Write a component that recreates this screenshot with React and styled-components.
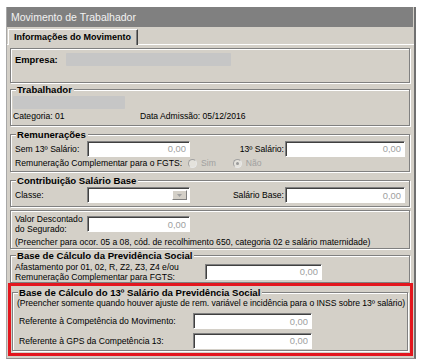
import React from 'react';
import styled, { createGlobalStyle } from 'styled-components';

const GlobalStyle = createGlobalStyle`
  body {
    margin: 0;
    background: #ffffff;
    font-family: "Liberation Sans", Arial, sans-serif;
    font-size: 8.6px;
    color: #000;
  }
`;

const Window = styled.div`
  margin: 7px 0 0 6px;
  width: 407px;
  background: #d4d0c8;
  border-left: 1px solid #a8a8a8;
  border-right: 2px solid #707070;
  border-bottom: 1px solid #909090;
`;

const TitleBar = styled.div`
  height: 20px;
  background: #808080;
  color: #f2f2f2;
  font-size: 10.5px;
  line-height: 20px;
  padding-left: 4px;
  margin-right: 1px;
`;

const TabStrip = styled.div`
  display: flex;
  height: 18px;
  padding: 2px 0 0 1px;
  box-sizing: border-box;
  border-bottom: 1px solid #ffffff;
`;

const Tab = styled.div`
  padding: 0 6px 0 5px;
  font-weight: bold;
  font-size: 9px;
  line-height: 15px;
  border-top: 1px solid #ffffff;
  border-left: 1px solid #ffffff;
  border-right: 1px solid #404040;
  box-shadow: inset -1px 0 0 #808080;
  margin-bottom: -1px;
  background: #d4d0c8;
`;

const TabPage = styled.div`
  padding: 3px 4px 2px 3px;
  display: flex;
  flex-direction: column;
`;

const Group = styled.fieldset`
  margin: ${p => p.$top || 0}px 0 0 0;
  padding: ${p => p.$pad || '0 4px 2px 4px'};
  border: 1px solid #808080;
  box-shadow: inset 1px 1px 0 #ffffff, 1px 1px 0 #ffffff;
  min-width: 0;
`;

const Legend = styled.legend`
  margin-left: ${p => p.$indent ?? 1}px;
  padding: 0 2px 0 1px;
  font-weight: bold;
  font-size: 9.6px;
  line-height: 11px;
  background: #d4d0c8;
`;

const Blur = styled.div`
  width: ${p => p.$w}px;
  height: 13px;
  background: #c6c6c6;
  border-radius: 1px;
`;

const EmpresaRow = styled.div`
  display: flex;
  align-items: center;
  gap: 8px;
  font-weight: bold;
  font-size: 9.4px;
  height: 14px;
`;

const InfoRow = styled.div`
  display: grid;
  grid-template-columns: 127px 1fr;
  height: 14px;
  align-items: center;
`;

const FieldRow = styled.div`
  display: grid;
  grid-template-columns: ${p => p.$cols};
  align-items: center;
  height: ${p => p.$h || 18}px;
`;

const Label = styled.span`
  white-space: nowrap;
  text-align: ${p => (p.$right ? 'right' : 'left')};
  padding-right: ${p => (p.$right ? 1 : 0)}px;
  line-height: 10px;
`;

const TextBox = styled.input`
  box-sizing: border-box;
  height: 16px;
  width: 100%;
  margin: 0;
  padding: 0 3px;
  font-family: inherit;
  font-size: 9.4px;
  color: #a0a0a0;
  text-align: right;
  background: #ffffff;
  border: 1px solid;
  border-color: #808080 #ffffff #ffffff #808080;
  box-shadow: inset 1px 1px 0 #404040;
  outline: none;
`;

const Select = styled.div`
  box-sizing: border-box;
  height: 16px;
  display: flex;
  justify-content: flex-end;
  align-items: stretch;
  padding: 2px;
  background: #ffffff;
  border: 1px solid;
  border-color: #808080 #ffffff #ffffff #808080;
  box-shadow: inset 1px 1px 0 #404040;
`;

const DropButton = styled.div`
  width: 13px;
  background: #d4d0c8;
  border: 1px solid;
  border-color: #ffffff #808080 #808080 #ffffff;
  display: flex;
  align-items: center;
  justify-content: center;
`;

const RadioGroup = styled.div`
  display: flex;
  align-items: center;
  gap: 17px;
  color: #a0a0a0;
`;

const RadioItem = styled.label`
  display: flex;
  align-items: center;
  gap: 4px;
`;

const RadioDot = styled.span`
  width: 7px;
  height: 7px;
  border-radius: 50%;
  border: 1px solid #a0a0a0;
  border-right-color: #e8e8e8;
  border-bottom-color: #e8e8e8;
  background: #e4e2dc;
  display: flex;
  align-items: center;
  justify-content: center;
  &::after {
    content: '';
    width: 3px;
    height: 3px;
    border-radius: 50%;
    background: ${p => (p.$on ? '#9a9a9a' : 'transparent')};
  }
`;

const Note = styled.div`
  white-space: nowrap;
  line-height: 11px;
  letter-spacing: ${p => p.$tight ? '-0.05px' : '0'};
`;

const Highlight = styled.div`
  margin: 0 -3px 0 -2px;
  padding: 0 2px 2px 1px;
  border: 3px solid #e3161e;
`;

const Radio = ({ on, children }) => (
  <RadioItem>
    <RadioDot $on={on} />
    {children}
  </RadioItem>
);

export default function App() {
  return (
    <>
      <GlobalStyle />
      <Window>
        <TitleBar>Movimento de Trabalhador</TitleBar>
        <TabStrip>
          <Tab>Informações do Movimento</Tab>
        </TabStrip>
        <TabPage>
          <Group $pad="3px 4px 16px 4px">
            <EmpresaRow>
              Empresa:
              <Blur $w={165} />
            </EmpresaRow>
          </Group>

          <Group $top={1} $pad="0 2px 2px 2px">
            <Legend $indent={3}>Trabalhador</Legend>
            <Blur $w={112} style={{ marginTop: 1 }} />
            <InfoRow>
              <span>Categoria: 01</span>
              <span>Data Admissão: 05/12/2016</span>
            </InfoRow>
          </Group>

          <Group $top={3}>
            <Legend>Remunerações</Legend>
            <FieldRow $cols="72px 103px 1fr 120px" $h={17}>
              <Label>Sem 13º Salário:</Label>
              <TextBox readOnly value="0,00" />
              <Label $right>13º Salário:</Label>
              <TextBox readOnly value="0,00" />
            </FieldRow>
            <FieldRow $cols="173px 1fr" $h={12}>
              <Label>Remuneração Complementar para o FGTS:</Label>
              <RadioGroup>
                <Radio>Sim</Radio>
                <Radio on>Não</Radio>
              </RadioGroup>
            </FieldRow>
          </Group>

          <Group $top={3}>
            <Legend>Contribuição Salário Base</Legend>
            <FieldRow $cols="72px 103px 1fr 120px">
              <Label>Classe:</Label>
              <Select>
                <DropButton>
                  <svg width="5" height="3" viewBox="0 0 5 3">
                    <path d="M0 0 H5 L2.5 3 Z" fill="#a0a0a0" />
                  </svg>
                </DropButton>
              </Select>
              <Label $right>Salário Base:</Label>
              <TextBox readOnly value="0,00" />
            </FieldRow>
          </Group>

          <Group $top={3} $pad="2px 4px 0 4px">
            <FieldRow $cols="72px 103px" $h={22}>
              <Label>Valor Descontado<br />do Segurado:</Label>
              <TextBox readOnly value="0,00" />
            </FieldRow>
            <Note style={{ marginTop: 2 }}>
              (Preencher para ocor. 05 a 08, cód. de recolhimento 650, categoria 02 e salário maternidade)
            </Note>
          </Group>

          <Group $top={1} $pad="0 4px 0 4px">
            <Legend>Base de Cálculo da Previdência Social</Legend>
            <FieldRow $cols="190px 117px" $h={21}>
              <Label>Afastamento por 01, 02, R, Z2, Z3, Z4 e/ou<br />Remuneração Complementar para FGTS:</Label>
              <TextBox readOnly value="0,00" />
            </FieldRow>
          </Group>

          <Highlight>
            <Group $top={1} $pad="0 4px 0 4px">
              <Legend>Base de Cálculo do 13º Salário da Previdência Social</Legend>
              <Note $tight>
                (Preencher somente quando houver ajuste de rem. variável e incidência para o INSS sobre 13º salário)
              </Note>
              <FieldRow $cols="174px 119px" $h={20} style={{ paddingLeft: 2, marginTop: 2 }}>
                <Label>Referente à Competência do Movimento:</Label>
                <TextBox readOnly value="0,00" />
              </FieldRow>
              <FieldRow $cols="174px 119px" $h={19} style={{ paddingLeft: 2 }}>
                <Label>Referente à GPS da Competência 13:</Label>
                <TextBox readOnly value="0,00" />
              </FieldRow>
            </Group>
          </Highlight>
        </TabPage>
      </Window>
    </>
  );
}
